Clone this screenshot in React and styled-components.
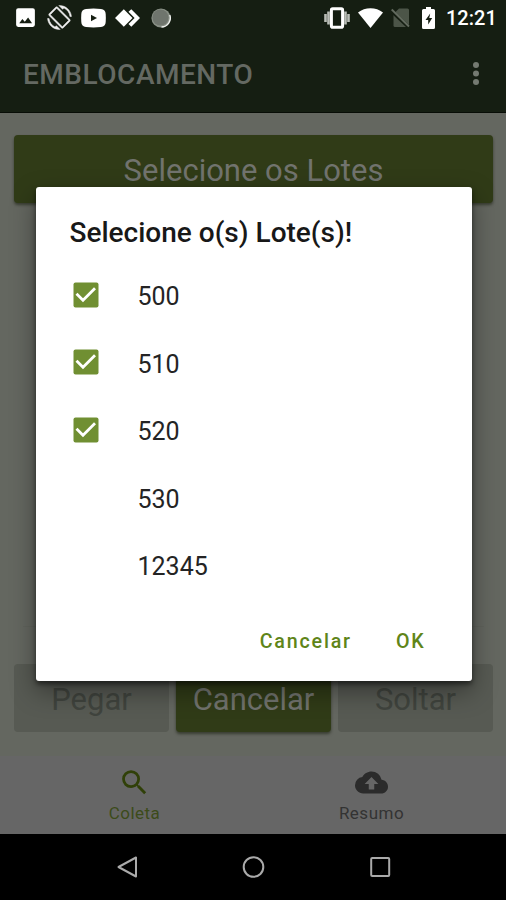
import React from "react";
import styled, { createGlobalStyle } from "styled-components";

const GlobalStyle = createGlobalStyle`
  * { box-sizing: border-box; }
  body { margin: 0; background: #000; font-family: Roboto, "Noto Sans", sans-serif; }
  button { font-family: inherit; border: 0; padding: 0; background: none; }
`;

const Screen = styled.div`
  position: relative;
  width: 506px;
  height: 900px;
  overflow: hidden;
  display: flex;
  flex-direction: column;
  background: #646760;
`;

const StatusBar = styled.header`
  height: 35px;
  padding: 0 10px 0 13px;
  display: flex;
  justify-content: space-between;
  align-items: center;
  background: #151e12;
  color: #fff;
`;

const StatusGroup = styled.div`
  display: flex;
  align-items: center;
  gap: ${(p) => p.$gap}px;
  svg { display: block; }
`;

const Clock = styled.span`
  width: 50px;
  font-size: 20px;
  font-weight: 500;
  line-height: 24px;
  white-space: nowrap;
`;

const AppBar = styled.div`
  height: 78px;
  padding: 0 20px 0 23px;
  display: flex;
  align-items: center;
  justify-content: space-between;
  background: #151e12;
  border-bottom: 1px solid #080d06;
  color: #646962;
`;

const AppTitle = styled.h1`
  margin: 0;
  padding-top: 2px;
  font-size: 28px;
  line-height: 34px;
  font-weight: 500;
  letter-spacing: 0.52px;
`;

const Content = styled.main`
  height: 643px;
  padding: 22px 13px 24px 14px;
  display: flex;
  flex-direction: column;
`;

const ListArea = styled.div`
  height: 424px;
  margin: 0 9px;
  border-bottom: 1px solid #60635c;
`;

const Actions = styled.div`
  margin-top: auto;
  display: grid;
  grid-template-columns: repeat(3, 1fr);
  gap: 7px;
`;

const FilledButton = styled.button`
  height: 68px;
  padding-top: 3px;
  flex-shrink: 0;
  border-radius: 4px;
  font-size: 31px;
  color: ${(p) => (p.$disabled ? "#40443e" : "#71736e")};
  background: ${(p) => (p.$disabled ? "#575a53" : "#303b17")};
  box-shadow: ${(p) => (p.$disabled ? "none" : "0 2px 3px rgba(20,25,10,.55)")};
`;

const Tabs = styled.nav`
  height: 78px;
  display: grid;
  grid-template-columns: 1fr 1fr;
  padding: 0 16px;
  background: #666;
`;

const Tab = styled.div`
  display: flex;
  flex-direction: column;
  align-items: center;
  padding-top: 10px;
  font-size: 17px;
  line-height: 20px;
  letter-spacing: 0.5px;
  color: ${(p) => (p.$active ? "#3c4b1a" : "#333")};
  svg { display: block; margin-bottom: 4px; fill: ${(p) => (p.$active ? "#304008" : "#2b2b2b")}; }
`;

const SystemNav = styled.footer`
  height: 66px;
  display: grid;
  grid-template-columns: repeat(3, 126.5px);
  justify-content: center;
  justify-items: center;
  align-items: center;
  padding-left: 1px;
  background: #000;
`;

const Overlay = styled.div`
  position: absolute;
  inset: 0;
  padding: 186.5px 34.5px 0 35.5px;
`;

const Dialog = styled.section`
  height: 494.5px;
  padding: 28.5px 34px 0;
  display: flex;
  flex-direction: column;
  background: #fff;
  border-radius: 3px;
  box-shadow: 0 10px 26px rgba(0,0,0,.4), 0 3px 5px rgba(0,0,0,.5);
`;

const DialogTitle = styled.h2`
  margin: 0 0 12px;
  font-size: 28px;
  line-height: 35px;
  font-weight: 500;
  color: #181818;
  white-space: nowrap;
`;

const Option = styled.label`
  height: 67.5px;
  display: grid;
  grid-template-columns: 68px 1fr;
  align-items: center;
  font-size: 25px;
  color: #242424;
  svg { display: block; margin: 0 0 2px 3.5px; }
`;

const OptionName = styled.span`
  padding-top: 2px;
`;

const DialogActions = styled.div`
  display: flex;
  justify-content: flex-end;
  gap: 44px;
  padding: 30px 12px 0 0;
`;

const TextButton = styled.button`
  font-size: 19.7px;
  line-height: 24px;
  font-weight: 500;
  letter-spacing: 1.8px;
  color: #5f8519;
`;

const PictureIcon = () => (
  <svg width="25" height="25" viewBox="0 0 24 24" fill="#fff">
    <path d="M21 19V5a2 2 0 0 0-2-2H5a2 2 0 0 0-2 2v14a2 2 0 0 0 2 2h14a2 2 0 0 0 2-2zM6 17.500l3-4 2.300 2.500 3.200-4 3.800 5.500z" />
  </svg>
);

const RotateIcon = () => (
  <svg width="25" height="25" viewBox="-.5 -.5 25 25" fill="#eee" stroke="#eee" strokeWidth=".5">
    <path d="M16.480 2.520c3.270 1.550 5.610 4.720 5.970 8.480h1.500C23.440 4.840 18.290 0 12 0l-.66.030 3.810 3.810 1.330-1.320zM10.230 1.750a1.490 1.490 0 0 0-2.120 0L1.750 8.110a1.490 1.490 0 0 0 0 2.120l12.020 12.020a1.490 1.490 0 0 0 2.120 0l6.360-6.360a1.490 1.490 0 0 0 0-2.120L10.230 1.750zM14.830 21.190 2.810 9.170l6.360-6.360 12.020 12.020-6.360 6.360zM7.520 21.480C4.250 19.940 1.910 16.760 1.550 13H.05C.56 19.160 5.710 24 12 24l.66-.03-3.810-3.810-1.330 1.320z" />
  </svg>
);

const VideoIcon = () => (
  <svg width="25" height="20" viewBox="0 0 25 20">
    <path d="M5 1Q12.500.2 20 1 24.500 1.300 24.700 6q.3 4 0 8-.2 4.700-4.700 5-7.500.8-15 0Q.5 18.700.3 14 0 10 .3 6 .5 1.300 5 1z" fill="#fff" />
    <path d="m10 6.800 6 3.200L10 13.200z" fill="#151e12" />
  </svg>
);

const RemoteIcon = () => (
  <svg width="25" height="18" viewBox="0 0 25 18" fill="#fff">
    <path d="m8.800.2 8.700 8.800-8.700 8.800L0 9zM13.500 2.800 16.300.2 25 9l-8.700 8.800-2.800-2.700L19.600 9z" />
  </svg>
);

const OrbIcon = () => (
  <svg width="22" height="20" viewBox="-2 0 22 20">
    <circle cx="10" cy="10" r="9.600" fill="#899086" />
    <path d="M18.800 7A9 9 0 0 1 10.500 19" fill="none" stroke="#eef0ed" strokeWidth="1.400" />
    <circle cx="9.500" cy="9.500" r="8" fill="#6f756d" />
  </svg>
);

const VibrateIcon = () => (
  <svg width="26" height="22" viewBox="0 0 26 22" fill="none">
    <path d="M1.500 7v8M4.500 4.500v13M21.500 4.500v13M24.500 7v8" stroke="#b9bdb7" strokeWidth="2.600" />
    <rect x="7.400" y="1.800" width="11.200" height="18.400" rx="1.300" stroke="#fff" strokeWidth="3" />
  </svg>
);

const WifiIcon = () => (
  <svg width="25" height="20" viewBox="0 0 25 20" fill="#fff">
    <path d="M12.500 20 0 4.500C7-1.200 18-1.200 25 4.500z" />
  </svg>
);

const NoSimIcon = () => (
  <svg width="19" height="20" viewBox="0 0 19 20">
    <path d="M8 .5h8.500Q18 .5 18 2v17H4Q2.500 19 2.500 17.500V6z" fill="#4c5548" />
    <path d="m0 2.500 17.500 16.500" stroke="#151e12" strokeWidth="3.500" />
    <path d="m.7 1.500 17.300 17" stroke="#636b5f" strokeWidth="1.800" />
  </svg>
);

const BatteryIcon = () => (
  <svg width="13" height="22" viewBox="0 0 13 22">
    <path d="M4 0h5v2h2.500Q13 2 13 3.500v17Q13 22 11.500 22h-10Q0 22 0 20.500v-17Q0 2 1.500 2H4z" fill="#fff" />
    <path d="M8.200 6.500 3.500 13h2.700v4.500l4-6.500H7.300z" fill="#151e12" />
  </svg>
);

const MoreIcon = () => (
  <svg width="20" height="26" viewBox="0 0 20 26" fill="#747a71">
    <circle cx="10" cy="4" r="3" /><circle cx="10" cy="12.500" r="3" /><circle cx="10" cy="21" r="3" />
  </svg>
);

const CheckedBox = () => (
  <svg width="26" height="26" viewBox="0 0 26 26">
    <rect x=".5" y=".5" width="25" height="25" rx="2" fill="#708f32" />
    <path d="m3.500 11.800 6.500 6.500L22 6.300" fill="none" stroke="#fff" strokeWidth="2.800" />
  </svg>
);

const SearchIcon = () => (
  <svg width="33" height="33" viewBox="0 0 24 24">
    <path d="M15.500 14h-.79l-.28-.27A6.470 6.470 0 0 0 16 9.500 6.500 6.500 0 1 0 9.500 16c1.610 0 3.090-.59 4.230-1.570l.27.28v.79l5 4.990L20.490 19l-4.990-5zm-6 0a4.500 4.500 0 1 1 0-9 4.500 4.500 0 0 1 0 9z" />
  </svg>
);

const CloudUploadIcon = () => (
  <svg width="33" height="33" viewBox="0 0 24 24">
    <path d="M19.350 10.040A7.490 7.490 0 0 0 12 4C9.110 4 6.600 5.640 5.350 8.040A5.994 5.994 0 0 0 0 14c0 3.310 2.690 6 6 6h13c2.760 0 5-2.240 5-5 0-2.640-2.050-4.780-4.650-4.960zM14 13v4h-4v-4H7l5-5 5 5h-3z" />
  </svg>
);

const BackIcon = () => (
  <svg width="24" height="24" viewBox="0 0 24 24" fill="none" stroke="#aaa" strokeWidth="2" strokeLinejoin="round">
    <path d="M21 2.500v19L3.500 12z" />
  </svg>
);

const HomeIcon = () => (
  <svg width="24" height="24" viewBox="0 0 24 24" fill="none" stroke="#aaa" strokeWidth="2">
    <circle cx="11.500" cy="12" r="9.800" />
  </svg>
);

const RecentsIcon = () => (
  <svg width="24" height="24" viewBox="0 0 24 24" fill="none" stroke="#aaa" strokeWidth="2">
    <rect x="3.200" y="3" width="18" height="18" rx="1" />
  </svg>
);

const lots = [
  { name: "500", checked: true },
  { name: "510", checked: true },
  { name: "520", checked: true },
  { name: "530", checked: false },
  { name: "12345", checked: false },
];

export default function App() {
  return (
    <>
      <GlobalStyle />
      <Screen>
        <StatusBar>
          <StatusGroup $gap={9}>
            <PictureIcon /><RotateIcon /><VideoIcon /><RemoteIcon /><OrbIcon />
          </StatusGroup>
          <StatusGroup $gap={12.5}>
            <StatusGroup $gap={8}><VibrateIcon /><WifiIcon /><NoSimIcon /></StatusGroup>
            <StatusGroup $gap={11}><BatteryIcon /><Clock>12:21</Clock></StatusGroup>
          </StatusGroup>
        </StatusBar>
        <AppBar>
          <AppTitle>EMBLOCAMENTO</AppTitle>
          <MoreIcon />
        </AppBar>
        <Content>
          <FilledButton>Selecione os Lotes</FilledButton>
          <ListArea />
          <Actions>
            <FilledButton $disabled>Pegar</FilledButton>
            <FilledButton>Cancelar</FilledButton>
            <FilledButton $disabled>Soltar</FilledButton>
          </Actions>
        </Content>
        <Tabs>
          <Tab $active><SearchIcon />Coleta</Tab>
          <Tab><CloudUploadIcon />Resumo</Tab>
        </Tabs>
        <SystemNav><BackIcon /><HomeIcon /><RecentsIcon /></SystemNav>
        <Overlay>
          <Dialog>
            <DialogTitle>Selecione o(s) Lote(s)!</DialogTitle>
            {lots.map((lot) => (
              <Option key={lot.name}>
                <span>{lot.checked && <CheckedBox />}</span>
                <OptionName>{lot.name}</OptionName>
              </Option>
            ))}
            <DialogActions>
              <TextButton>Cancelar</TextButton>
              <TextButton>OK</TextButton>
            </DialogActions>
          </Dialog>
        </Overlay>
      </Screen>
    </>
  );
}
